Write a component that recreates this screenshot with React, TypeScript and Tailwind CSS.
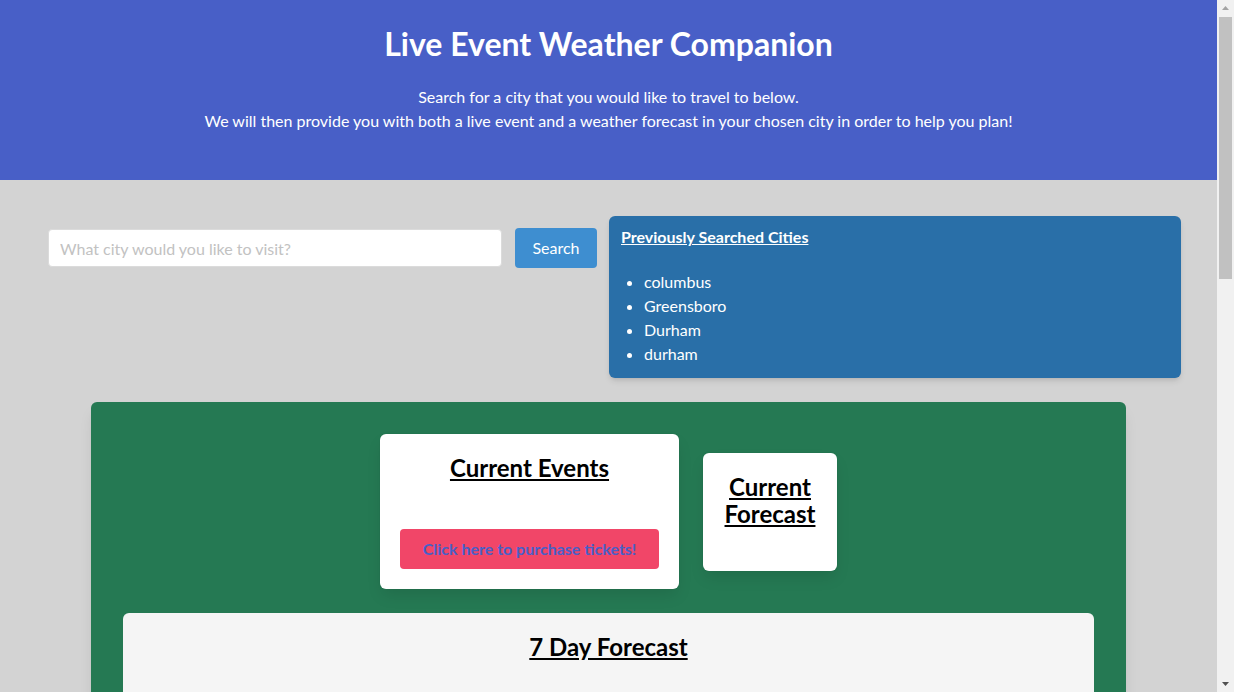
import React from "react";

function FakeScrollbar() {
  return (
    <div className="relative h-full w-[17px] shrink-0 bg-[#f1f1f1]">
      <svg className="absolute left-[4px] top-[5px]" width="9" height="6" viewBox="0 0 9 6">
        <path d="M4.5 1 L8 5 L1 5 Z" fill="#a3a3a3" />
      </svg>
      <div className="absolute left-[2px] top-[17px] h-[262px] w-[13px] bg-[#c1c1c1]" />
      <svg className="absolute bottom-[5px] left-[4px]" width="9" height="6" viewBox="0 0 9 6">
        <path d="M1 1 L8 1 L4.5 5 Z" fill="#505050" />
      </svg>
    </div>
  );
}

export default function App() {
  const cities = ["columbus", "Greensboro", "Durham", "durham"];
  return (
    <div className="flex h-[692px] overflow-hidden bg-[#d3d3d3] font-['Lato','Noto_Sans',sans-serif] text-[#4a4a4a]">
      <div className="h-full w-[1217px] shrink-0 overflow-hidden">
        <header className="bg-[#485fc7] pt-[26px] pb-[47px] text-center text-white">
          <h1 className="text-[32px] font-bold leading-[36px]">Live Event Weather Companion</h1>
          <div className="mt-[23px] text-[16px] leading-[24px]">
            <p>Search for a city that you would like to travel to below.</p>
            <p>We will then provide you with both a live event and a weather forecast in your chosen city in order to help you plan!</p>
          </div>
        </header>

        <main className="pb-10">
          <div className="flex items-start pt-[36px] pl-[48px] pr-[36px]">
            <input
              type="text"
              placeholder="What city would you like to visit?"
              className="mt-[13px] h-[38px] w-[454px] rounded-[4px] border border-[#dbdbdb] bg-white px-[11px] text-[16px] text-[#363636] placeholder:text-[#c2c2c2] outline-none"
            />
            <button className="ml-[13px] mt-[12px] h-[40px] w-[82px] rounded-[4px] bg-[#3e8ed0] text-[16px] text-white">
              Search
            </button>
            <div className="ml-[12px] flex-1 rounded-[6px] bg-[#296fa8] px-[12px] pt-[9px] pb-[12px] text-[16px] leading-[24px] text-white shadow-md">
              <p className="font-bold underline">Previously Searched Cities</p>
              <ul className="mt-[21px] list-disc pl-[23px]">
                {cities.map((c, i) => (
                  <li key={i} className="h-[24px]">{c}</li>
                ))}
              </ul>
            </div>
          </div>

          <section className="mx-auto mt-[24px] w-[1035px] rounded-[6px] bg-[#257953] p-[32px] shadow-lg">
            <div className="flex items-center justify-center gap-[24px]">
              <div className="w-[299px] rounded-[6px] bg-white p-[20px] text-center shadow-[0_8px_16px_-2px_rgba(10,10,10,0.1),0_0_0_1px_rgba(10,10,10,0.02)]">
                <h2 className="text-[24px] font-bold leading-[27px] text-black underline">Current Events</h2>
                <div className="mt-[24px] h-[24px]"></div>
                <button className="h-[40px] w-full rounded-[4px] bg-[#f14668] text-[16px] font-bold text-[#485fc7]">
                  Click here to purchase tickets!
                </button>
              </div>
              <div className="w-[134px] rounded-[6px] bg-white p-[20px] pb-[44px] text-center shadow-[0_8px_16px_-2px_rgba(10,10,10,0.1),0_0_0_1px_rgba(10,10,10,0.02)]">
                <h2 className="text-[24px] font-bold leading-[27px] text-black underline">Current Forecast</h2>
              </div>
            </div>

            <div className="mt-[24px] h-[260px] rounded-[6px] bg-[#f5f5f5] p-[20px] text-center">
              <h2 className="text-[24px] font-bold leading-[27px] text-black underline">7 Day Forecast</h2>
            </div>
          </section>
        </main>
      </div>
      <FakeScrollbar />
    </div>
  );
}
